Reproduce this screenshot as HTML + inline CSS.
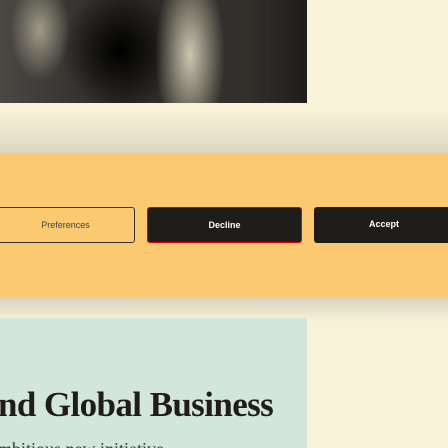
<!DOCTYPE html><html style="overflow:hidden;height:448px"><head><style>
body{margin:0;width:448px;height:448px;overflow:hidden;background:#f8f3d8;position:relative;font-family:"Liberation Sans",sans-serif}
.img{position:absolute;left:0;top:0;width:307px;height:103px;background:
radial-gradient(ellipse 30px 50px at 40px 30px,rgba(200,195,170,.7),transparent),
radial-gradient(ellipse 35px 90px at 190px 55px,rgba(220,215,190,.9),transparent),
radial-gradient(ellipse 60px 60px at 120px 50px,#000,transparent),
linear-gradient(90deg,#4a4843,#2a2925 40%,#33312c 80%,#1e1d1a)}
.sh1{position:absolute;left:0;top:110px;width:448px;height:43px;background:linear-gradient(#f8f3d800,#dcd6c0)}
.ban{position:absolute;left:0;top:153px;width:448px;height:144px;background:#fbc96f}
.sh2{position:absolute;left:0;top:297px;width:448px;height:25px;background:linear-gradient(#d6d1bb,#f8f3d800)}
.b{position:absolute;top:207px;height:36px;box-sizing:border-box;border-radius:3px;font-size:9px;font-weight:bold;text-align:center;line-height:34px}
.mint{position:absolute;left:0;top:318px;width:307px;height:130px;background:#d2e6dc}
h1{position:absolute;left:-2px;top:385px;margin:0;font:bold 35px "Liberation Serif",serif;color:#1f1d19;letter-spacing:-.6px;white-space:nowrap}
p{position:absolute;left:-2px;top:440px;margin:0;font:18px/18px "Liberation Serif",serif;color:#333;white-space:nowrap;height:8px;overflow:hidden}
</style></head><body>
<div class="img"></div><div class="sh1"></div><div class="ban"></div><div class="sh2"></div>
<div class="b" style="left:-4px;width:139px;border:1px solid #333;color:#444;font-weight:normal">Preferences</div>
<div class="b" style="left:147px;width:155px;background:#1f1d19;border:1px solid #e00;color:#fff">Decline</div>
<div class="b" style="left:314px;width:140px;background:#1f1d19;color:#fff">Accept</div>
<div class="mint"></div>
<h1>nd Global Business</h1>
<p>mbitious new initiative</p>
</body></html>
